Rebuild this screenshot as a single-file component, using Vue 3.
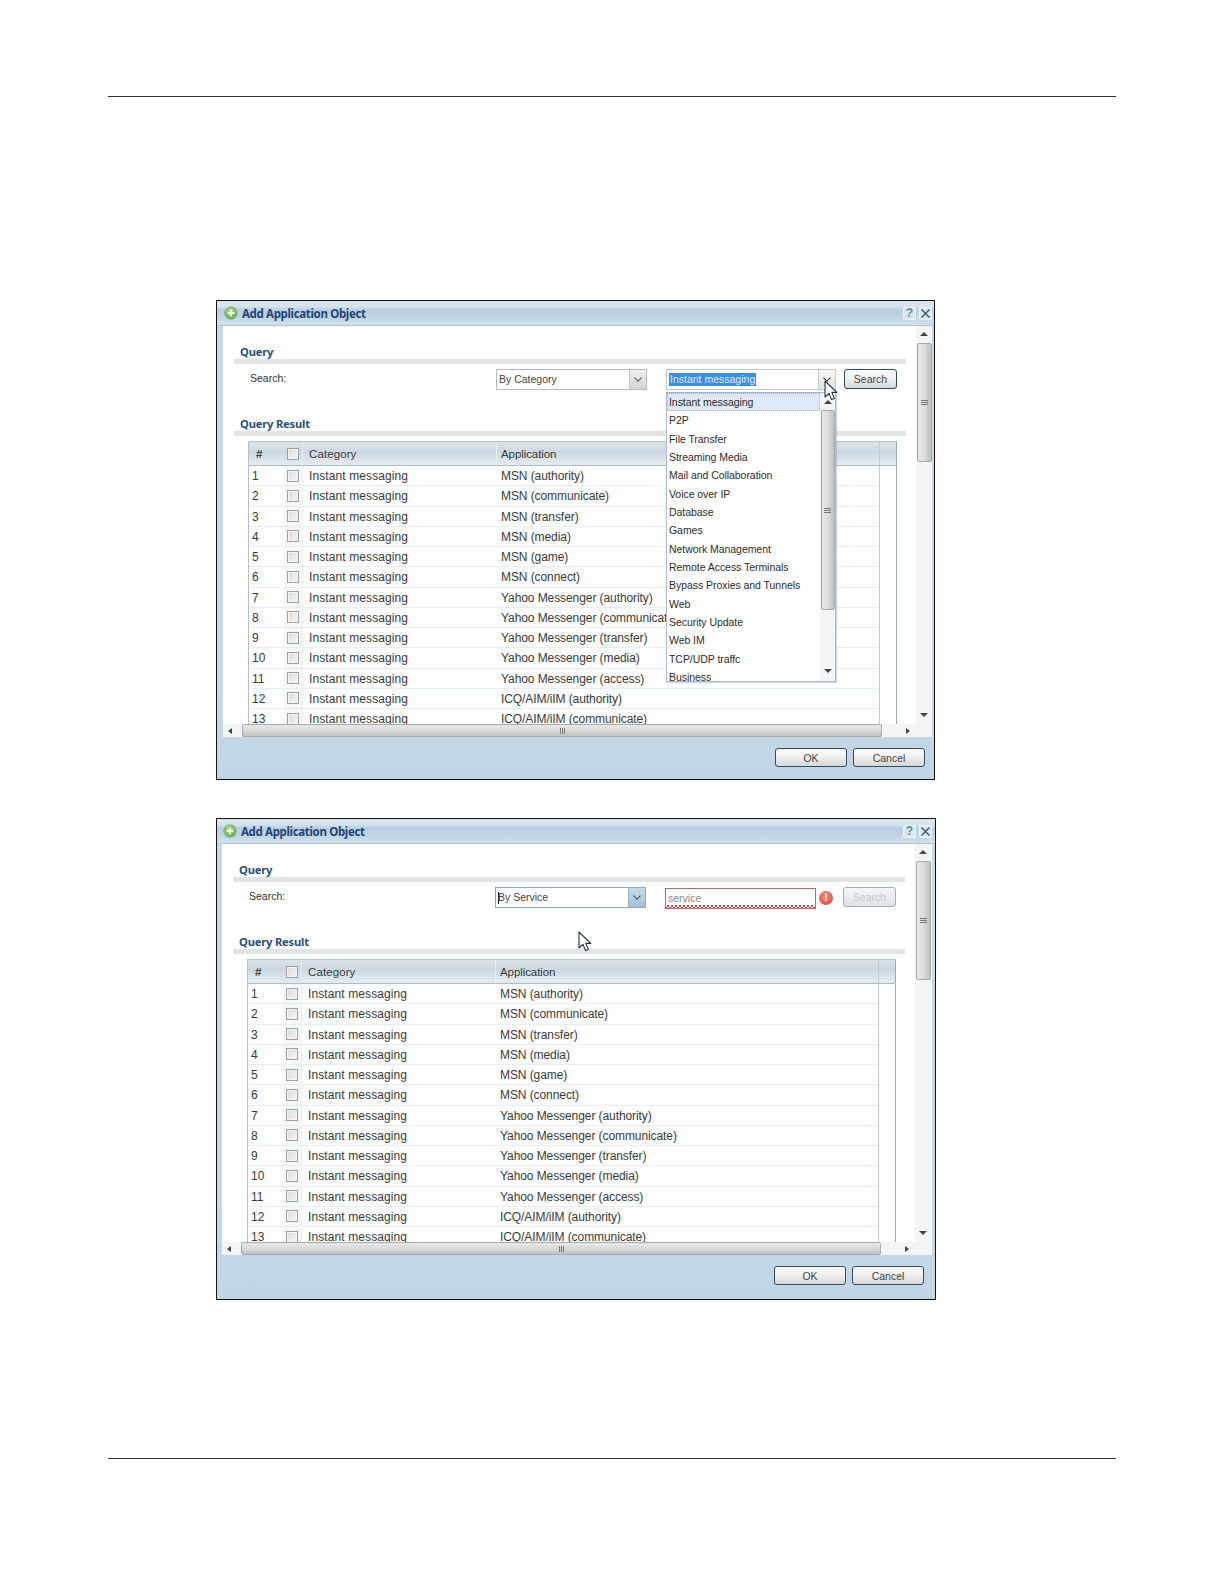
<script setup>
const rows = [
  'MSN (authority)', 'MSN (communicate)', 'MSN (transfer)', 'MSN (media)', 'MSN (game)', 'MSN (connect)',
  'Yahoo Messenger (authority)', 'Yahoo Messenger (communicate)', 'Yahoo Messenger (transfer)',
  'Yahoo Messenger (media)', 'Yahoo Messenger (access)', 'ICQ/AIM/iIM (authority)', 'ICQ/AIM/iIM (communicate)'
]
const options = [
  'Instant messaging', 'P2P', 'File Transfer', 'Streaming Media', 'Mail and Collaboration', 'Voice over IP',
  'Database', 'Games', 'Network Management', 'Remote Access Terminals', 'Bypass Proxies and Tunnels', 'Web',
  'Security Update', 'Web IM', 'TCP/UDP traffc', 'Business'
]
const dialogs = [
  { id: 'category', combo: 'By Category', open: true },
  { id: 'service', combo: 'By Service', open: false }
]
</script>

<template>
  <div class="page">
    <div class="rule"></div>
    <section v-for="d in dialogs" :key="d.id" class="dialog" :class="d.open ? 'is-open' : 'is-service'">
      <header class="titlebar">
        <svg class="add-icon" width="14" height="14" viewBox="0 0 14 14">
          <defs>
            <radialGradient :id="'g' + d.id" cx="45%" cy="35%" r="70%">
              <stop offset="0" stop-color="#b5e08c" />
              <stop offset="1" stop-color="#5fa648" />
            </radialGradient>
          </defs>
          <circle cx="7" cy="7" r="6.2" :fill="'url(#g' + d.id + ')'" stroke="#7fa98c" stroke-width="0.9" />
          <path d="M7 3.8v6.4M3.8 7h6.4" stroke="#fff" stroke-width="1.9" />
        </svg>
        <h2 class="title">Add Application Object</h2>
        <span class="tool help">?</span>
        <span class="tool close">
          <svg width="11" height="11" viewBox="0 0 11 11"><path d="M1.5 1.5l8 8M9.5 1.5l-8 8" stroke="#3f5c76" stroke-width="1.5" /></svg>
        </span>
      </header>

      <div class="main">
        <div class="scroll-area">
          <div class="pane">
            <h3 class="heading">Query</h3>
            <div class="search-row">
              <span class="search-label">Search:</span>
              <div class="combo combo-type" :class="{ focused: !d.open }">
                <span class="combo-text">{{ d.combo }}</span>
                <span v-if="!d.open" class="caret"></span>
                <span class="combo-btn"><i class="chev"></i></span>
              </div>
              <template v-if="d.open">
                <div class="combo combo-value">
                  <span class="combo-text"><span class="selected">Instant messaging</span></span>
                  <span class="combo-btn plain"><i class="chev dark"></i></span>
                </div>
                <button class="btn search">Search</button>
              </template>
              <template v-else>
                <div class="invalid"><span>service</span></div>
                <span class="error">!</span>
                <button class="btn search disabled">Search</button>
              </template>
            </div>

            <h3 class="heading result">Query Result</h3>
            <div class="grid">
              <div class="grow head">
                <div class="c-num">#</div>
                <div class="c-check"><span class="check"></span></div>
                <div class="c-cat">Category</div>
                <div class="c-app">Application</div>
                <div class="c-end"></div>
              </div>
              <div v-for="(r, i) in rows" :key="r" class="grow" :class="{ alt: i % 2 === 1 }">
                <div class="c-num">{{ i + 1 }}</div>
                <div class="c-check"><span class="check"></span></div>
                <div class="c-cat">Instant messaging</div>
                <div class="c-app">{{ r }}</div>
                <div class="c-end"></div>
              </div>
            </div>
          </div>
          <div class="hscroll">
            <i class="arrow left"></i>
            <div class="hthumb"><span class="hgrip"></span></div>
            <i class="arrow right"></i>
          </div>
        </div>
        <div class="vscroll">
          <i class="arrow up"></i>
          <div class="vthumb"><span class="vgrip"></span></div>
          <i class="arrow down"></i>
        </div>
      </div>

      <footer class="footer">
        <button class="btn action">OK</button>
        <button class="btn action">Cancel</button>
      </footer>

      <div v-if="d.open" class="dropdown">
        <ul class="option-list">
          <li v-for="(o, i) in options" :key="o" class="option" :class="{ active: i === 0 }">{{ o }}</li>
        </ul>
        <div class="dd-scroll">
          <i class="arrow up small"></i>
          <div class="dd-thumb"><span class="vgrip"></span></div>
          <i class="arrow down small"></i>
        </div>
      </div>

      <svg class="pointer" width="14" height="22" viewBox="0 0 14 22">
        <path d="M1 1v16l4-3.6 2.6 6.2 2.8-1.2-2.6-6h5z" fill="#fff" stroke="#26323c" stroke-width="1.1" stroke-linejoin="round" />
      </svg>
    </section>
    <div class="rule bottom"></div>
  </div>
</template>

<style>
html, body { margin: 0; background: #fff; }
</style>

<style scoped>
.page {
  width: 1224px;
  height: 1584px;
  box-sizing: border-box;
  padding: 96px 108px 0;
  background: #fff;
  font-family: "Liberation Sans", Arial, sans-serif;
  color: #333;
  overflow: hidden;
}
.rule { height: 1px; background: #333; }
.rule.bottom { margin-top: 158px; }

.dialog {
  position: relative;
  box-sizing: border-box;
  width: 719px;
  height: 480px;
  margin: 203px 0 0 108px;
  border: 1px solid #111;
  background: linear-gradient(#c6d9e8 80%, #c2d5e4);
  display: flex;
  flex-direction: column;
}
.dialog.is-service {
  width: 720px;
  height: 482px;
  margin-top: 38px;
}

.titlebar {
  height: 25px;
  flex: none;
  box-sizing: border-box;
  display: flex;
  align-items: center;
  padding: 0 2px 0 7px;
  background: linear-gradient(#dbe6f0 0, #d6e3ee 22%, #b9cfe1 38%, #c3d6e6 75%, #d3e1ec 100%);
  border-bottom: 1px solid #a9c3d8;
}
.is-service .titlebar { padding-left: 6px; padding-right: 3px; }
.add-icon { flex: none; }
.title {
  margin: 0 0 0 4px;
  flex: 1;
  font: bold 11.5px "Noto Sans", "Liberation Sans", sans-serif;
  letter-spacing: -0.35px;
  color: #1f4576;
}
.tool {
  width: 13px;
  height: 13px;
  display: flex;
  align-items: center;
  justify-content: center;
  margin-left: 3px;
  background: #dbe8f2;
  border-radius: 2px;
  box-shadow: inset 0 0 0 1px #eef4f8;
}
.help { font: bold 12px "Liberation Sans", sans-serif; color: #5f8aac; }

.main {
  flex: none;
  height: 411px;
  margin: 0 2px 0 6px;
  display: flex;
  background: #fff;
}
.is-service .main { margin-left: 5px; margin-right: 3px; }
.scroll-area { width: 693px; flex: none; display: flex; flex-direction: column; }
.pane {
  height: 398px;
  box-sizing: border-box;
  padding: 19px 10px 0 11px;
  overflow: hidden;
}
.heading {
  margin: 0;
  height: 19px;
  box-sizing: border-box;
  border-bottom: 5px solid #e2e5e6;
  font: bold 11.2px/14px "Noto Sans", "Liberation Sans", sans-serif;
  letter-spacing: -0.2px;
  color: #2a4f7c;
  padding-left: 6px;
}
.heading.result { margin-top: 27px; }

.search-row {
  margin-top: 5px;
  height: 21px;
  display: flex;
  align-items: flex-start;
  position: relative;
}
.search-label {
  width: 246px;
  padding-left: 16px;
  box-sizing: content-box;
  flex: none;
  font: 10.5px/19px "Liberation Sans", sans-serif;
  color: #333;
}
.combo {
  position: relative;
  box-sizing: border-box;
  height: 21px;
  border: 1px solid #b4bcc2;
  background: #fff;
  display: flex;
  align-items: center;
  font: 10.5px "Liberation Sans", sans-serif;
  color: #444;
}
.combo-type { width: 151px; }
.combo-type.focused { border-color: #8fa9bd; }
.combo-value { width: 170px; margin-left: 19px; border-color: #c2c8cc; }
.combo-text { flex: 1; padding-left: 2px; margin-top: -1px; }
.combo-btn {
  width: 16px;
  height: 19px;
  flex: none;
  display: flex;
  align-items: center;
  justify-content: center;
  background: linear-gradient(#f0f0f0, #d4d4d4);
  border-left: 1px solid #c8c8c8;
}
.focused .combo-btn { background: linear-gradient(#c6d9e9, #a5c2da); border-left-color: #9db6ca; }
.combo-btn.plain { background: linear-gradient(#f6f8fa, #dfe4e8); }
.chev {
  width: 5px;
  height: 5px;
  margin-top: -3px;
  border-right: 1.5px solid #445;
  border-bottom: 1.5px solid #445;
  transform: rotate(45deg) scale(0.9);
}
.chev.dark { border-color: #222; }
.caret {
  position: absolute;
  left: 2px;
  top: 4px;
  width: 1px;
  height: 12px;
  background: #222;
}
.selected {
  background: #3b8fe2;
  color: #dcecf9;
  padding: 0 1px;
  display: inline-block;
  line-height: 13px;
}
.btn {
  box-sizing: border-box;
  margin: 0;
  padding: 0 0 1px;
  border: 1px solid #2f4d63;
  border-radius: 3px;
  background: linear-gradient(#fbfbfb, #f1f1f1 45%, #d6d6d6);
  font: 10.5px "Liberation Sans", sans-serif;
  color: #444;
}
.btn.search { width: 53px; height: 20px; margin-left: 8px; }
.btn.disabled {
  border-color: #9fb0bc;
  color: #c6cdd2;
  background: linear-gradient(#f4f6f7, #dfe3e6);
}
.invalid {
  box-sizing: border-box;
  width: 151px;
  height: 21px;
  margin: 1px 0 0 19px;
  padding: 2px 0 0 2px;
  border: 1px solid #c0636a;
  font: 10.5px/15px "Liberation Sans", sans-serif;
  color: #888;
  background-image:
    linear-gradient(45deg, transparent 45%, #cc4444 45%, #cc4444 65%, transparent 65%),
    linear-gradient(-45deg, transparent 45%, #cc4444 45%, #cc4444 65%, transparent 65%);
  background-size: 4px 3px;
  background-repeat: repeat-x;
  background-position: left bottom;
}
.error {
  width: 14px;
  height: 14px;
  margin: 4px 0 0 3px;
  flex: none;
  border-radius: 50%;
  background: radial-gradient(circle at 45% 35%, #f08a80, #d9433c);
  color: #fff;
  font: bold 10px/14px "Liberation Sans", sans-serif;
  text-align: center;
}
.is-service .btn.search { margin-left: 10px; }

.grid {
  margin: 5px 0 0 14px;
  width: 649px;
  border-left: 1px solid #b4c0c8;
  box-sizing: border-box;
  font-size: 12px;
  color: #3a3a3a;
}
.grow {
  display: flex;
  height: 20.25px;
  line-height: 20px;
  box-sizing: border-box;
  border-bottom: 1px solid #e8eff3;
}
.grow.alt { background: #fbfdfe; }
.grow.head {
  height: 25px;
  line-height: 24px;
  border-top: 1px solid #b7c3cb;
  border-bottom: 1px solid #aebcc6;
  background: linear-gradient(#dbe3e9, #ccd8e1 45%, #d5dfe6 60%, #e5ebf0);
  font-size: 11.5px;
}
.c-num { width: 35px; flex: none; padding-left: 3px; box-sizing: border-box; }
.head .c-num { padding-left: 7px; font-weight: bold; color: #444; }
.c-check {
  width: 19px;
  flex: none;
  display: flex;
  align-items: center;
  background: #f6f7f7;
  border-right: 1px solid #edf0f2;
  box-sizing: border-box;
  padding-left: 3px;
}
.head .c-check { background: transparent; border-right-color: #e4eaee; }
.check {
  width: 12px;
  height: 12px;
  box-sizing: border-box;
  border: 1px solid #9aa0a4;
  background: linear-gradient(135deg, #dcdcdc, #f4f4f4);
  box-shadow: inset 0 0 0 1px #f4f4f4;
}
.c-cat { width: 193px; flex: none; padding-left: 6px; box-sizing: border-box; letter-spacing: 0.1px; }
.c-app { width: 383px; flex: none; padding-left: 5px; box-sizing: border-box; white-space: nowrap; letter-spacing: -0.08px; }
.head .c-app { border-left: 1px solid #e9eef2; padding-left: 4px; }
.c-end {
  flex: 1;
  background: #fff;
  margin-bottom: -1px;
  border-left: 1px solid #c3ccd3;
  border-right: 1px solid #9fa9b0;
}
.head .c-end { background: transparent; margin-bottom: 0; }

.hscroll {
  height: 13px;
  flex: none;
  display: flex;
  align-items: center;
  background: #f2f4f5;
  position: relative;
}
.hthumb {
  width: 640px;
  height: 13px;
  margin-left: 10px;
  box-sizing: border-box;
  border: 1px solid #a6aaad;
  border-radius: 2px;
  background: linear-gradient(#e8e8e8, #dadada 50%, #c2c2c2);
  display: flex;
  align-items: center;
  justify-content: center;
}
.hgrip {
  width: 5px;
  height: 6px;
  background: repeating-linear-gradient(90deg, #777 0 1px, transparent 1px 2px);
}
.arrow { width: 0; height: 0; flex: none; display: block; border: 0 solid transparent; }
.arrow.left { margin-left: 5px; border-width: 3px 4px 3px 0; border-right-color: #444; }
.arrow.right { margin-left: 24px; border-width: 3px 0 3px 4px; border-left-color: #444; }
.arrow.up { border-width: 0 4px 4px; border-bottom-color: #444; }
.arrow.down { border-width: 4px 4px 0; border-top-color: #444; }

.vscroll {
  width: 16px;
  flex: none;
  background: #f2f4f5;
  display: flex;
  flex-direction: column;
  align-items: center;
  padding-top: 6px;
  box-sizing: border-box;
}
.vthumb {
  width: 15px;
  height: 119px;
  margin: 7px 0 251px;
  box-sizing: border-box;
  border: 1px solid #a6aaad;
  border-radius: 2px;
  background: linear-gradient(90deg, #e9e9e9, #dcdcdc 50%, #bfbfbf);
  display: flex;
  align-items: center;
  justify-content: center;
}
.vgrip {
  width: 7px;
  height: 5px;
  background: repeating-linear-gradient(#777 0 1px, transparent 1px 2px);
}

.footer {
  flex: 1;
  display: flex;
  justify-content: flex-end;
  gap: 6px;
  padding: 11px 9px 0 0;
  box-sizing: border-box;
}
.btn.action { width: 72px; height: 19px; padding: 1px 0 0; }
.is-service .footer { padding-right: 11px; }

.dropdown {
  position: absolute;
  left: 449px;
  top: 91px;
  width: 170px;
  height: 290px;
  box-sizing: border-box;
  border: 1px solid #aeb9d2;
  border-top-color: #9fb3d0;
  background: #fff;
  display: flex;
  overflow: hidden;
  z-index: 2;
  box-shadow: 1px 1px 1px rgba(120, 140, 170, 0.35);
}
.option-list {
  list-style: none;
  margin: 0;
  padding: 0;
  width: 153px;
  flex: none;
}
.option {
  height: 18.33px;
  padding-left: 2px;
  font: 10.5px/18px "Liberation Sans", sans-serif;
  letter-spacing: -0.05px;
  color: #2c2c2c;
  white-space: nowrap;
}
.option.active {
  background: #dfe8f6;
  outline: 1px dotted #9fb3d0;
  outline-offset: -1px;
}
.dd-scroll {
  width: 15px;
  flex: none;
  background: #f3f5f6;
  display: flex;
  flex-direction: column;
  align-items: center;
  padding-top: 7px;
  box-sizing: border-box;
}
.dd-thumb {
  width: 14px;
  height: 200px;
  margin: 6px 0 59px;
  box-sizing: border-box;
  border: 1px solid #a6aaad;
  border-radius: 2px;
  background: linear-gradient(90deg, #e9e9e9, #dcdcdc 50%, #bfbfbf);
  display: flex;
  align-items: center;
  justify-content: center;
}

.pointer { position: absolute; z-index: 3; left: 607px; top: 79px; }
.is-service .pointer { left: 361px; top: 112px; }
</style>
